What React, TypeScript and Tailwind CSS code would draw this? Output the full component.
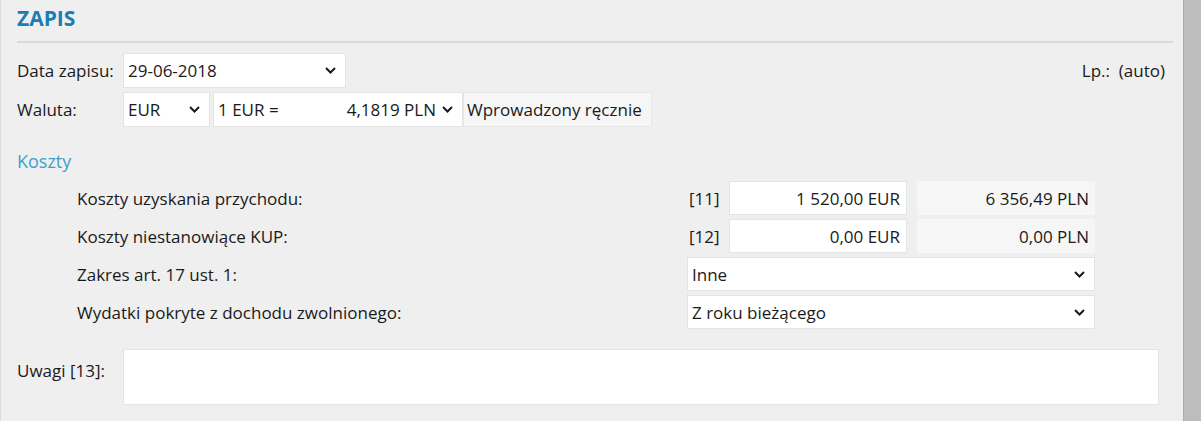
import React from 'react';

const Chevron: React.FC = () => (
  <svg width="11" height="7" viewBox="0 0 11 7" className="shrink-0">
    <polyline points="1,1 5.5,5.5 10,1" fill="none" stroke="#1a1a1a" strokeWidth="2" />
  </svg>
);

const Select: React.FC<{ value: string; className?: string }> = ({ value, className = '' }) => (
  <div className={`flex items-center justify-between bg-white border border-[#e4e4e4] pl-[4px] pr-[9px] ${className}`}>
    <span>{value}</span>
    <Chevron />
  </div>
);

const CostRow: React.FC<{ label: string; code: string; eur: string; pln: string }> = ({ label, code, eur, pln }) => (
  <div className="flex items-center h-[34px]">
    <div className="flex-1 pl-[60px]">{label}</div>
    <div className="w-[408px] mr-[78px] flex items-center h-full">
      <span className="w-[42px] pl-[2px]">{code}</span>
      <div className="w-[178px] h-full bg-white border border-[#e4e4e4] flex items-center justify-end pr-[6px]">{eur}</div>
      <div className="ml-[10px] w-[178px] h-full bg-[#f6f6f6] flex items-center justify-end pr-[6px]">{pln}</div>
    </div>
  </div>
);

const SelectRow: React.FC<{ label: string; value: string }> = ({ label, value }) => (
  <div className="flex items-center h-[34px]">
    <div className="flex-1 pl-[60px]">{label}</div>
    <Select value={value} className="w-[408px] mr-[78px] h-full" />
  </div>
);

export default function App() {
  return (
    <div className="w-[1201px] h-[421px] flex bg-[#efefef] text-[17px] leading-[23px] text-[#1a1a1a] overflow-hidden font-['Segoe_UI','Open_Sans',sans-serif]">
      <div className="flex-1 border-l border-[#dcdcdc] pl-4 pr-[10px]">
        <div className="h-[41px] pt-[4px] text-[21px] leading-[28px] font-bold text-[#1b7db3]">ZAPIS</div>
        <div className="h-[2px] bg-[#dadada]" />

        <div className="mt-[10px] flex items-center h-[35px]">
          <span className="w-[106px]">Data zapisu:</span>
          <Select value="29-06-2018" className="w-[223px] h-full" />
          <div className="flex-1" />
          <span className="mr-[8px]">Lp.:&nbsp; (auto)</span>
        </div>

        <div className="mt-[4px] flex items-center h-[35px]">
          <span className="w-[106px]">Waluta:</span>
          <Select value="EUR" className="w-[87px] h-full" />
          <div className="ml-[3px] w-[250px] h-full bg-white border border-[#e4e4e4] flex items-center pl-[4px] pr-[9px]">
            <span>1 EUR =</span>
            <span className="flex-1 text-right mr-[6px]">4,1819 PLN</span>
            <Chevron />
          </div>
          <div className="w-[189px] h-full bg-[#f6f6f6] border border-[#e8e8e8] flex items-center pl-[3px] whitespace-nowrap">Wprowadzony ręcznie</div>
        </div>

        <div className="mt-[22px] text-[18px] text-[#3aa2c9] leading-[24px]">Koszty</div>

        <div className="mt-[8px] flex flex-col gap-[4px]">
          <CostRow label="Koszty uzyskania przychodu:" code="[11]" eur="1 520,00 EUR" pln="6 356,49 PLN" />
          <CostRow label="Koszty niestanowiące KUP:" code="[12]" eur="0,00 EUR" pln="0,00 PLN" />
          <SelectRow label="Zakres art. 17 ust. 1:" value="Inne" />
          <SelectRow label="Wydatki pokryte z dochodu zwolnionego:" value="Z roku bieżącego" />
        </div>

        <div className="mt-[20px] flex items-start">
          <span className="w-[106px] pt-[10px]">Uwagi [13]:</span>
          <div className="w-[1036px] h-[56px] bg-white border border-[#e4e4e4]" />
        </div>
      </div>
      <div className="w-[18px] bg-[#bdbdbd] border-l border-[#acacac]" />
    </div>
  );
}
